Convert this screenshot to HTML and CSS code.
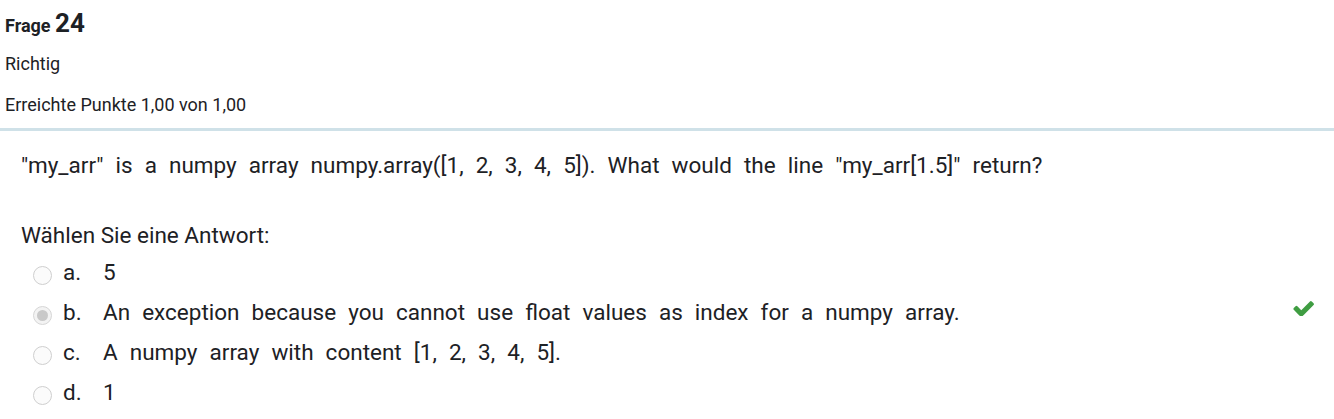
FILE: index.html
```html
<!DOCTYPE html>
<html lang="de">
<head>
<meta charset="utf-8">
<title>Frage 24</title>
<link rel="stylesheet" href="styles.css">
</head>
<body>
<div class="que">
  <div class="info">
    <h3 class="no">Frage <span class="qno">24</span></h3>
    <div class="state">Richtig</div>
    <div class="grade">Erreichte Punkte 1,00 von 1,00</div>
  </div>
  <div class="content">
    <div class="qtext">"my_arr" is a numpy array numpy.array([1, 2, 3, 4, 5]). What would the line "my_arr[1.5]" return?</div>
    <div class="prompt">Wählen Sie eine Antwort:</div>
    <div class="answer">
      <div class="option"><span class="radio"></span><span class="num">a.</span><span class="txt">5</span></div>
      <div class="option"><span class="radio checked"></span><span class="num">b.</span><span class="txt">An exception because you cannot use float values as index for a numpy array.</span>
        <svg class="tick" viewBox="93 330 1580 1100" width="21" height="14.6" aria-hidden="true"><path d="M1671 566q0 40-28 68l-724 724-136 136q-28 28-68 28t-68-28l-136-136-362-362q-28-28-28-68t28-68l136-136q28-28 68-28t68 28l294 295 656-657q28-28 68-28t68 28l136 136q28 28 28 68z"/></svg>
      </div>
      <div class="option"><span class="radio"></span><span class="num">c.</span><span class="txt">A numpy array with content [1, 2, 3, 4, 5].</span></div>
      <div class="option"><span class="radio"></span><span class="num">d.</span><span class="txt">1</span></div>
    </div>
  </div>
</div>
</body>
</html>
```

FILE: styles.css
```css
html, body {
  margin: 0;
  padding: 0;
  background: #ffffff;
}
body {
  font-family: Roboto, "Liberation Sans", Arial, sans-serif;
  color: #1d2125;
}
.info {
  padding-left: 5px;
  padding-bottom: 3px;
  border-bottom: 3px solid #cfe1e8;
}
.no {
  margin: 0;
  padding-top: 10px;
  height: 33px;
  font-size: 18px;
  font-weight: 700;
  line-height: 1;
}
.qno {
  font-size: 26px;
  line-height: 1;
}
.state, .grade {
  font-size: 18px;
  line-height: 41px;
  height: 41px;
}
.content {
  padding: 18px 20px 0 21px;
  font-size: 22.5px;
  line-height: 33.75px;
}
.qtext {
  word-spacing: 6.5px;
}
.prompt {
  margin-top: 36px;
}
.option {
  display: flex;
  align-items: center;
  height: 40px;
  padding-left: 12px;
  word-spacing: 6.5px;
}
.radio {
  box-sizing: border-box;
  width: 19px;
  height: 19px;
  margin-top: 6px;
  margin-right: 11px;
  border: 1px solid #cfcfcf;
  border-radius: 50%;
  background: #fbfbfb;
  flex: none;
  display: flex;
  align-items: center;
  justify-content: center;
}
.radio.checked {
  border-color: #d6d6d6;
  background: #f3f3f3;
}
.radio.checked::after {
  content: "";
  width: 11px;
  height: 11px;
  border-radius: 50%;
  background: #c9c9c9;
}
.num {
  width: 40px;
  flex: none;
}
.tick {
  margin-left: auto;
  margin-bottom: 8px;
  fill: #3f9d42;
  flex: none;
}
```
